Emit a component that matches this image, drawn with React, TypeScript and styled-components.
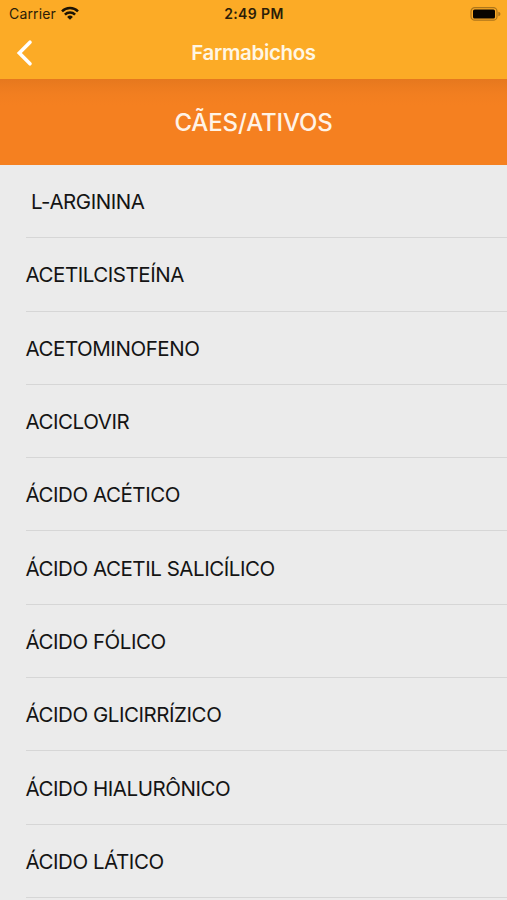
import React from "react";
import styled, { createGlobalStyle } from "styled-components";

const Global = createGlobalStyle`
  * { box-sizing: border-box; }
  body { margin: 0; background: #ebebeb; font-family: Inter, "Liberation Sans", sans-serif; overflow: hidden; }
`;
const Screen = styled.div`
  width: 507px; height: 900px; overflow: hidden; background: #ebebeb;
  display: flex; flex-direction: column;
`;
const Top = styled.header`
  flex: none; height: 79px; background: #fcab26; z-index: 1;
`;
const Status = styled.div`
  height: 27px; padding: 0 6px 0 9px; display: grid; grid-template-columns: 1fr auto 1fr; align-items: center;
  color: #2b1d08; font-size: 14px;
`;
const Carrier = styled.div`display: flex; align-items: center; gap: 5px; letter-spacing: 0.15px;`;
const Clock = styled.div`font-weight: 600; letter-spacing: 0.4px; padding-right: 2px;`;
const Battery = styled.svg`justify-self: end;`;
const Nav = styled.div`
  height: 50px; display: grid; grid-template-columns: 48px 1fr 48px; align-items: center;
`;
const Back = styled.button`
  border: 0; background: none; padding: 2px 0 0 15px; height: 50px; display: flex; align-items: center;
`;
const Title = styled.h1`
  margin: 0; text-align: center; color: #fff6e4; font-size: 20.5px; font-weight: 600; letter-spacing: -0.35px;
`;
const Banner = styled.h2`
  flex: none; margin: 0; height: 86px; padding-top: 1px; display: flex; align-items: center; justify-content: center;
  background: linear-gradient(#e6781e, #f17e20 14px, #f58020 26px);
  color: #fff3e6; font-size: 24px; font-weight: 500; letter-spacing: -0.12px;
`;
const List = styled.ul`margin: 0; padding: 0 0 0 26px; list-style: none;`;
const Row = styled.li`
  height: 73.3px; padding-top: 1px; display: flex; align-items: center; border-bottom: 1px solid #d6d6d6;
  font-size: 20.5px; letter-spacing: -0.45px; color: #141414;
`;
const Label = styled.span<{ $inset?: number }>`margin-left: ${(p) => p.$inset ?? -0.5}px; white-space: nowrap;`;

const items = ["L-ARGININA", "ACETILCISTEÍNA", "ACETOMINOFENO", "ACICLOVIR", "ÁCIDO ACÉTICO", "ÁCIDO ACETIL SALICÍLICO", "ÁCIDO FÓLICO", "ÁCIDO GLICIRRÍZICO", "ÁCIDO HIALURÔNICO", "ÁCIDO LÁTICO"];

export default function App() {
  return (
    <Screen>
      <Global />
      <Top>
        <Status>
          <Carrier>Carrier
            <svg width="18" height="15" viewBox="0 0 18 15" fill="none" stroke="#1c1404" strokeWidth="2.5">
              <path d="M1 5.3a11.4 11.4 0 0 1 16 0M3.9 8.6a7.2 7.2 0 0 1 10.2 0" />
              <path d="M9 13.8 6.1 10.9a4.2 4.2 0 0 1 5.8 0Z" fill="#1c1404" stroke="none" />
            </svg>
          </Carrier>
          <Clock>2:49 PM</Clock>
          <Battery width="31" height="14" viewBox="0 0 31 14">
            <rect x="1" y=".6" width="26" height="12.6" rx="3.8" fill="none" stroke="#ad761b" strokeWidth="1.2" />
            <rect x="3" y="2.5" width="22" height="9" rx="1.6" fill="#080500" />
            <path d="M28.3 4.8q2.2.5 2.2 2.2t-2.2 2.2Z" fill="#ad761b" />
          </Battery>
        </Status>
        <Nav>
          <Back aria-label="Voltar">
            <svg width="18" height="28" viewBox="0 0 18 28" fill="none" stroke="#fff" strokeWidth="3.6" strokeLinecap="round"><path d="M15 3.2 4.3 14 15 24.8" /></svg>
          </Back>
          <Title>Farmabichos</Title>
        </Nav>
      </Top>
      <Banner>CÃES/ATIVOS</Banner>
      <List>{items.map((t, i) => <Row key={t}><Label $inset={i === 0 ? 5 : undefined}>{t}</Label></Row>)}</List>
    </Screen>
  );
}
